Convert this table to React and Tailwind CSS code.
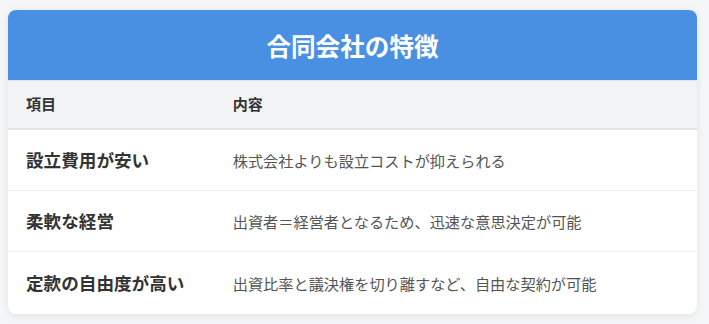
import React from "react";

const rows = [
  { item: "設立費用が安い", detail: "株式会社よりも設立コストが抑えられる" },
  { item: "柔軟な経営", detail: "出資者＝経営者となるため、迅速な意思決定が可能" },
  { item: "定款の自由度が高い", detail: "出資比率と議決権を切り離すなど、自由な契約が可能" },
];

const App = () => {
  return (
    <div
      className="min-h-screen bg-[#f5f6f8] px-2 pt-[10px]"
      style={{ fontFamily: '"Noto Sans CJK JP", "Noto Sans", sans-serif' }}
    >
      <div className="w-[689px] bg-white rounded-lg overflow-hidden shadow-[0_2px_10px_rgba(0,0,0,0.08)]">
        {/* Title */}
        <div className="h-[70px] bg-[#4a90e2] flex items-center justify-center">
          <h1 className="text-white text-[24.6px] font-bold leading-none">合同会社の特徴</h1>
        </div>

        {/* Table head */}
        <div className="flex h-[50px] items-center bg-[#f1f3f5] border-b-2 border-[#e3e5e8] border-t border-t-[#dde3ea]">
          <div className="w-[30%] pl-[18px] text-[15px] font-bold text-[#333]">項目</div>
          <div className="flex-1 pl-[18px] text-[15px] font-bold text-[#333]">内容</div>
        </div>

        {/* Rows */}
        {rows.map((row, i) => (
          <div
            key={row.item}
            className={`flex items-center ${i < rows.length - 1 ? "h-[61px] border-b border-[#eeeeee]" : "h-[62px]"}`}
          >
            <div className="w-[30%] pl-[18px] text-[17.6px] font-bold text-[#333]">{row.item}</div>
            <div className="flex-1 pl-[18px] text-[15.2px] text-[#555]">{row.detail}</div>
          </div>
        ))}
      </div>
    </div>
  );
};

export default App;
